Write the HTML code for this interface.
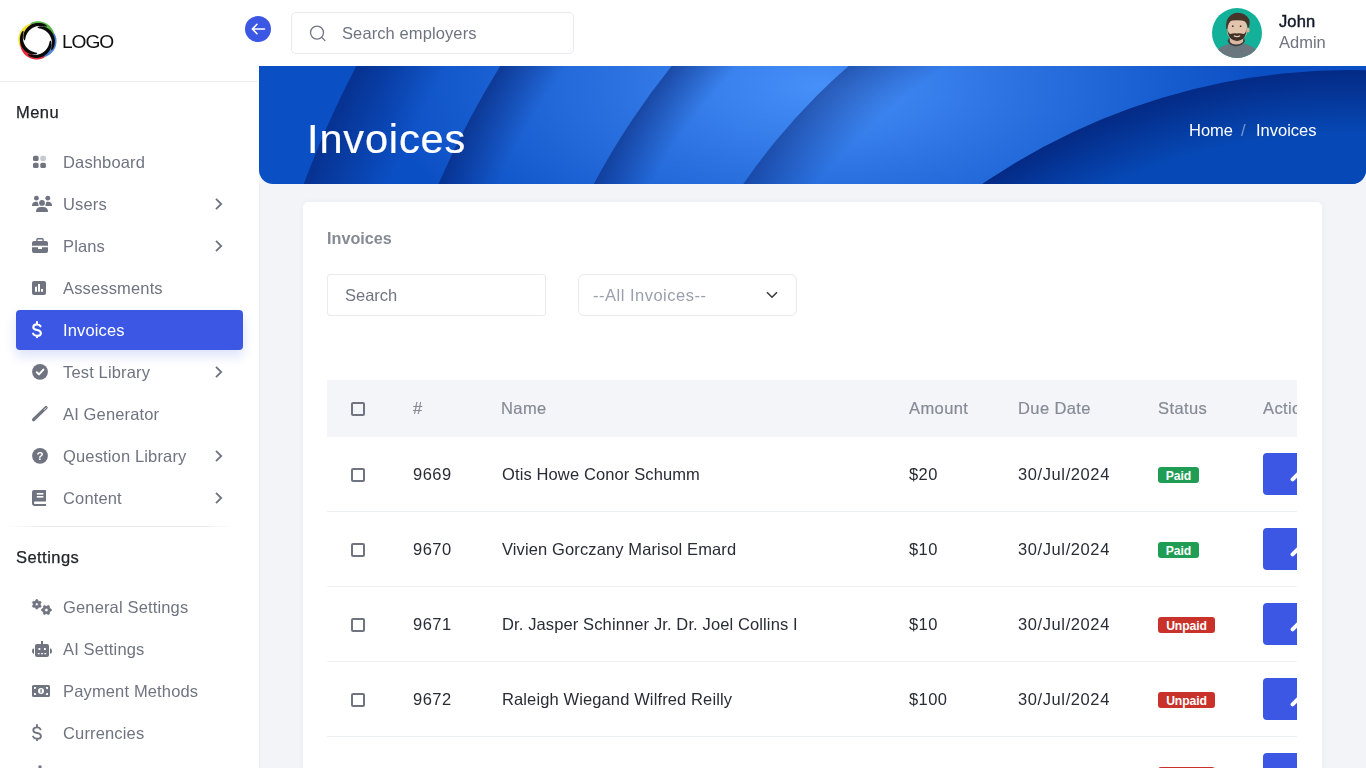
<!DOCTYPE html>
<html><head><meta charset="utf-8"><title>Invoices</title><style>
*{margin:0;padding:0;box-sizing:border-box}
html,body{width:1366px;height:768px;overflow:hidden;background:#f2f4f8;font-family:"Liberation Sans",sans-serif}
.t{will-change:transform}
.t{position:absolute;white-space:nowrap}
.abs{position:absolute}
svg{position:absolute;overflow:visible}
</style></head>
<body>
<div class="abs" style="left:0;top:0;width:259px;height:768px;background:#fff"></div><div class="abs" style="left:259px;top:184px;width:1px;height:584px;background:#e9ebf0"></div><div class="abs" style="left:259px;top:0;width:1107px;height:66px;background:#fff"></div><div class="abs" style="left:0;top:81px;width:258px;height:1px;background:#ebedf0"></div><svg style="left:17px;top:20px" width="41" height="41" viewBox="0 0 41 41"><path d="M4.45 27.84 L3.39 27.21 L2.81 26.32 L2.35 25.38 L1.99 24.39 L1.70 23.37 L1.48 22.33 L1.34 21.28 L1.27 20.21 L1.27 19.15 L1.35 18.08 L1.49 17.02 L1.70 15.97 L1.97 14.93 L2.31 13.92 L2.72 12.92 L3.18 11.96 L3.71 11.03 L4.29 10.14 L4.93 9.28 L5.61 8.47 L6.35 7.71 L7.13 7.00 L7.95 6.34 L8.81 5.74 L9.70 5.20 L10.62 4.71 L11.57 4.30 L12.53 3.94 L13.51 3.66 L14.51 3.44 L15.51 3.30 L16.51 3.24 L17.51 3.26 L18.49 3.37 L19.46 3.61 L20.40 4.40 L20.40 4.40 L19.55 5.15 L18.73 5.45 L17.92 5.73 L17.14 6.01 L16.37 6.30 L15.61 6.63 L14.88 6.97 L14.16 7.35 L13.46 7.75 L12.78 8.18 L12.12 8.64 L11.48 9.12 L10.87 9.64 L10.28 10.18 L9.71 10.75 L9.17 11.34 L8.66 11.96 L8.17 12.61 L7.71 13.28 L7.29 13.97 L6.89 14.69 L6.52 15.43 L6.19 16.18 L5.89 16.96 L5.63 17.76 L5.40 18.57 L5.20 19.40 L5.04 20.25 L4.92 21.11 L4.83 21.99 L4.78 22.88 L4.76 23.79 L4.77 24.71 L4.80 25.65 L4.81 26.64 L4.45 27.84Z" fill="#f2e236"/><path d="M12.96 4.45 L13.59 3.39 L14.48 2.81 L15.42 2.35 L16.41 1.99 L17.43 1.70 L18.47 1.48 L19.52 1.34 L20.59 1.27 L21.65 1.27 L22.72 1.35 L23.78 1.49 L24.83 1.70 L25.87 1.97 L26.88 2.31 L27.88 2.72 L28.84 3.18 L29.77 3.71 L30.66 4.29 L31.52 4.93 L32.33 5.61 L33.09 6.35 L33.80 7.13 L34.46 7.95 L35.06 8.81 L35.60 9.70 L36.09 10.62 L36.50 11.57 L36.86 12.53 L37.14 13.51 L37.36 14.51 L37.50 15.51 L37.56 16.51 L37.54 17.51 L37.43 18.49 L37.19 19.46 L36.40 20.40 L36.40 20.40 L35.65 19.55 L35.35 18.73 L35.07 17.92 L34.79 17.14 L34.50 16.37 L34.17 15.61 L33.83 14.88 L33.45 14.16 L33.05 13.46 L32.62 12.78 L32.16 12.12 L31.68 11.48 L31.16 10.87 L30.62 10.28 L30.05 9.71 L29.46 9.17 L28.84 8.66 L28.19 8.17 L27.52 7.71 L26.83 7.29 L26.11 6.89 L25.37 6.52 L24.62 6.19 L23.84 5.89 L23.04 5.63 L22.23 5.40 L21.40 5.20 L20.55 5.04 L19.69 4.92 L18.81 4.83 L17.92 4.78 L17.01 4.76 L16.09 4.77 L15.15 4.80 L14.16 4.81 L12.96 4.45Z" fill="#5db749"/><path d="M36.35 12.96 L37.41 13.59 L37.99 14.48 L38.45 15.42 L38.81 16.41 L39.10 17.43 L39.32 18.47 L39.46 19.52 L39.53 20.59 L39.53 21.65 L39.45 22.72 L39.31 23.78 L39.10 24.83 L38.83 25.87 L38.49 26.88 L38.08 27.88 L37.62 28.84 L37.09 29.77 L36.51 30.66 L35.87 31.52 L35.19 32.33 L34.45 33.09 L33.67 33.80 L32.85 34.46 L31.99 35.06 L31.10 35.60 L30.18 36.09 L29.23 36.50 L28.27 36.86 L27.29 37.14 L26.29 37.36 L25.29 37.50 L24.29 37.56 L23.29 37.54 L22.31 37.43 L21.34 37.19 L20.40 36.40 L20.40 36.40 L21.25 35.65 L22.07 35.35 L22.88 35.07 L23.66 34.79 L24.43 34.50 L25.19 34.17 L25.92 33.83 L26.64 33.45 L27.34 33.05 L28.02 32.62 L28.68 32.16 L29.32 31.68 L29.93 31.16 L30.52 30.62 L31.09 30.05 L31.63 29.46 L32.14 28.84 L32.63 28.19 L33.09 27.52 L33.51 26.83 L33.91 26.11 L34.28 25.37 L34.61 24.62 L34.91 23.84 L35.17 23.04 L35.40 22.23 L35.60 21.40 L35.76 20.55 L35.88 19.69 L35.97 18.81 L36.02 17.92 L36.04 17.01 L36.03 16.09 L36.00 15.15 L35.99 14.16 L36.35 12.96Z" fill="#5183d2"/><path d="M27.84 36.35 L27.21 37.41 L26.32 37.99 L25.38 38.45 L24.39 38.81 L23.37 39.10 L22.33 39.32 L21.28 39.46 L20.21 39.53 L19.15 39.53 L18.08 39.45 L17.02 39.31 L15.97 39.10 L14.93 38.83 L13.92 38.49 L12.92 38.08 L11.96 37.62 L11.03 37.09 L10.14 36.51 L9.28 35.87 L8.47 35.19 L7.71 34.45 L7.00 33.67 L6.34 32.85 L5.74 31.99 L5.20 31.10 L4.71 30.18 L4.30 29.23 L3.94 28.27 L3.66 27.29 L3.44 26.29 L3.30 25.29 L3.24 24.29 L3.26 23.29 L3.37 22.31 L3.61 21.34 L4.40 20.40 L4.40 20.40 L5.15 21.25 L5.45 22.07 L5.73 22.88 L6.01 23.66 L6.30 24.43 L6.63 25.19 L6.97 25.92 L7.35 26.64 L7.75 27.34 L8.18 28.02 L8.64 28.68 L9.12 29.32 L9.64 29.93 L10.18 30.52 L10.75 31.09 L11.34 31.63 L11.96 32.14 L12.61 32.63 L13.28 33.09 L13.97 33.51 L14.69 33.91 L15.43 34.28 L16.18 34.61 L16.96 34.91 L17.76 35.17 L18.57 35.40 L19.40 35.60 L20.25 35.76 L21.11 35.88 L21.99 35.97 L22.88 36.02 L23.79 36.04 L24.71 36.03 L25.65 36.00 L26.64 35.99 L27.84 36.35Z" fill="#e42a3b"/><path d="M7.50 20.40 L6.73 19.57 L6.48 18.70 L6.35 17.82 L6.30 16.91 L6.33 16.00 L6.43 15.08 L6.60 14.17 L6.85 13.26 L7.16 12.36 L7.53 11.48 L7.97 10.62 L8.47 9.79 L9.04 8.98 L9.66 8.21 L10.33 7.47 L11.06 6.78 L11.84 6.14 L12.67 5.54 L13.53 5.00 L14.44 4.51 L15.39 4.09 L16.36 3.72 L17.36 3.42 L18.39 3.18 L19.43 3.02 L20.48 2.92 L21.55 2.90 L22.61 2.94 L23.67 3.06 L24.73 3.26 L25.77 3.53 L26.78 3.87 L27.77 4.30 L28.71 4.81 L29.58 5.43 L30.15 6.47 L30.15 6.47 L28.88 6.58 L27.87 6.39 L26.89 6.20 L25.94 6.06 L24.99 5.96 L24.06 5.90 L23.14 5.89 L22.23 5.94 L21.34 6.02 L20.47 6.16 L19.62 6.34 L18.78 6.56 L17.97 6.83 L17.19 7.13 L16.43 7.48 L15.70 7.86 L15.00 8.28 L14.33 8.74 L13.69 9.22 L13.08 9.73 L12.51 10.28 L11.98 10.84 L11.48 11.43 L11.01 12.05 L10.58 12.68 L10.19 13.33 L9.83 13.99 L9.51 14.67 L9.23 15.36 L8.98 16.05 L8.76 16.76 L8.57 17.48 L8.41 18.20 L8.26 18.92 L8.09 19.65 L7.50 20.40Z" fill="#0b0b0b"/><path d="M20.40 7.50 L21.23 6.73 L22.10 6.48 L22.98 6.35 L23.89 6.30 L24.80 6.33 L25.72 6.43 L26.63 6.60 L27.54 6.85 L28.44 7.16 L29.32 7.53 L30.18 7.97 L31.01 8.47 L31.82 9.04 L32.59 9.66 L33.33 10.33 L34.02 11.06 L34.66 11.84 L35.26 12.67 L35.80 13.53 L36.29 14.44 L36.71 15.39 L37.08 16.36 L37.38 17.36 L37.62 18.39 L37.78 19.43 L37.88 20.48 L37.90 21.55 L37.86 22.61 L37.74 23.67 L37.54 24.73 L37.27 25.77 L36.93 26.78 L36.50 27.77 L35.99 28.71 L35.37 29.58 L34.33 30.15 L34.33 30.15 L34.22 28.88 L34.41 27.87 L34.60 26.89 L34.74 25.94 L34.84 24.99 L34.90 24.06 L34.91 23.14 L34.86 22.23 L34.78 21.34 L34.64 20.47 L34.46 19.62 L34.24 18.78 L33.97 17.97 L33.67 17.19 L33.32 16.43 L32.94 15.70 L32.52 15.00 L32.06 14.33 L31.58 13.69 L31.07 13.08 L30.52 12.51 L29.96 11.98 L29.37 11.48 L28.75 11.01 L28.12 10.58 L27.47 10.19 L26.81 9.83 L26.13 9.51 L25.44 9.23 L24.75 8.98 L24.04 8.76 L23.32 8.57 L22.60 8.41 L21.88 8.26 L21.15 8.09 L20.40 7.50Z" fill="#0b0b0b"/><path d="M33.30 20.40 L34.07 21.23 L34.32 22.10 L34.45 22.98 L34.50 23.89 L34.47 24.80 L34.37 25.72 L34.20 26.63 L33.95 27.54 L33.64 28.44 L33.27 29.32 L32.83 30.18 L32.33 31.01 L31.76 31.82 L31.14 32.59 L30.47 33.33 L29.74 34.02 L28.96 34.66 L28.13 35.26 L27.27 35.80 L26.36 36.29 L25.41 36.71 L24.44 37.08 L23.44 37.38 L22.41 37.62 L21.37 37.78 L20.32 37.88 L19.25 37.90 L18.19 37.86 L17.13 37.74 L16.07 37.54 L15.03 37.27 L14.02 36.93 L13.03 36.50 L12.09 35.99 L11.22 35.37 L10.65 34.33 L10.65 34.33 L11.92 34.22 L12.93 34.41 L13.91 34.60 L14.86 34.74 L15.81 34.84 L16.74 34.90 L17.66 34.91 L18.57 34.86 L19.46 34.78 L20.33 34.64 L21.18 34.46 L22.02 34.24 L22.83 33.97 L23.61 33.67 L24.37 33.32 L25.10 32.94 L25.80 32.52 L26.47 32.06 L27.11 31.58 L27.72 31.07 L28.29 30.52 L28.82 29.96 L29.32 29.37 L29.79 28.75 L30.22 28.12 L30.61 27.47 L30.97 26.81 L31.29 26.13 L31.57 25.44 L31.82 24.75 L32.04 24.04 L32.23 23.32 L32.39 22.60 L32.54 21.88 L32.71 21.15 L33.30 20.40Z" fill="#0b0b0b"/><path d="M20.40 33.30 L19.57 34.07 L18.70 34.32 L17.82 34.45 L16.91 34.50 L16.00 34.47 L15.08 34.37 L14.17 34.20 L13.26 33.95 L12.36 33.64 L11.48 33.27 L10.62 32.83 L9.79 32.33 L8.98 31.76 L8.21 31.14 L7.47 30.47 L6.78 29.74 L6.14 28.96 L5.54 28.13 L5.00 27.27 L4.51 26.36 L4.09 25.41 L3.72 24.44 L3.42 23.44 L3.18 22.41 L3.02 21.37 L2.92 20.32 L2.90 19.25 L2.94 18.19 L3.06 17.13 L3.26 16.07 L3.53 15.03 L3.87 14.02 L4.30 13.03 L4.81 12.09 L5.43 11.22 L6.47 10.65 L6.47 10.65 L6.58 11.92 L6.39 12.93 L6.20 13.91 L6.06 14.86 L5.96 15.81 L5.90 16.74 L5.89 17.66 L5.94 18.57 L6.02 19.46 L6.16 20.33 L6.34 21.18 L6.56 22.02 L6.83 22.83 L7.13 23.61 L7.48 24.37 L7.86 25.10 L8.28 25.80 L8.74 26.47 L9.22 27.11 L9.73 27.72 L10.28 28.29 L10.84 28.82 L11.43 29.32 L12.05 29.79 L12.68 30.22 L13.33 30.61 L13.99 30.97 L14.67 31.29 L15.36 31.57 L16.05 31.82 L16.76 32.04 L17.48 32.23 L18.20 32.39 L18.92 32.54 L19.65 32.71 L20.40 33.30Z" fill="#0b0b0b"/></svg><div class="t " style="left:61.6px;top:31.25px;font-size:19.2px;line-height:22px;color:#111;font-weight:normal;letter-spacing:-1.1px">LOGO</div>
<div class="t " style="left:16px;top:102.18px;font-size:16.5px;line-height:20px;color:#212529;font-weight:normal;-webkit-text-stroke:0.25px #212529;letter-spacing:0.45px">Menu</div>
<div class="abs" style="left:16px;top:310px;width:227px;height:40px;background:#3b57e3;border-radius:4px;box-shadow:0 6px 12px rgba(59,87,227,0.18)"></div><div class="t " style="left:63.2px;top:152.38px;font-size:16.5px;line-height:20px;color:#6f7480;font-weight:normal;letter-spacing:0.15px">Dashboard</div>
<div class="t " style="left:63.2px;top:194.38px;font-size:16.5px;line-height:20px;color:#6f7480;font-weight:normal;letter-spacing:0.15px">Users</div>
<svg style="left:214px;top:198.3px" width="10" height="12" viewBox="0 0 10 12"><path d="M2 0.8 L7.2 6 L2 11.2" fill="none" stroke="#6f7480" stroke-width="1.8"/></svg><div class="t " style="left:63.2px;top:236.38px;font-size:16.5px;line-height:20px;color:#6f7480;font-weight:normal;letter-spacing:0.15px">Plans</div>
<svg style="left:214px;top:240.3px" width="10" height="12" viewBox="0 0 10 12"><path d="M2 0.8 L7.2 6 L2 11.2" fill="none" stroke="#6f7480" stroke-width="1.8"/></svg><div class="t " style="left:63.2px;top:278.38px;font-size:16.5px;line-height:20px;color:#6f7480;font-weight:normal;letter-spacing:0.15px">Assessments</div>
<div class="t " style="left:63.2px;top:320.38px;font-size:16.5px;line-height:20px;color:#fff;font-weight:normal;letter-spacing:0.15px">Invoices</div>
<div class="t " style="left:63.2px;top:362.38px;font-size:16.5px;line-height:20px;color:#6f7480;font-weight:normal;letter-spacing:0.15px">Test Library</div>
<svg style="left:214px;top:366.3px" width="10" height="12" viewBox="0 0 10 12"><path d="M2 0.8 L7.2 6 L2 11.2" fill="none" stroke="#6f7480" stroke-width="1.8"/></svg><div class="t " style="left:63.2px;top:404.38px;font-size:16.5px;line-height:20px;color:#6f7480;font-weight:normal;letter-spacing:0.15px">AI Generator</div>
<div class="t " style="left:63.2px;top:446.38px;font-size:16.5px;line-height:20px;color:#6f7480;font-weight:normal;letter-spacing:0.15px">Question Library</div>
<svg style="left:214px;top:450.3px" width="10" height="12" viewBox="0 0 10 12"><path d="M2 0.8 L7.2 6 L2 11.2" fill="none" stroke="#6f7480" stroke-width="1.8"/></svg><div class="t " style="left:63.2px;top:488.38px;font-size:16.5px;line-height:20px;color:#6f7480;font-weight:normal;letter-spacing:0.15px">Content</div>
<svg style="left:214px;top:492.3px" width="10" height="12" viewBox="0 0 10 12"><path d="M2 0.8 L7.2 6 L2 11.2" fill="none" stroke="#6f7480" stroke-width="1.8"/></svg><div class="abs" style="left:8px;top:526px;width:225px;height:1px;background:linear-gradient(90deg,rgba(230,232,236,0),#e6e8ec 15%,#e6e8ec 85%,rgba(230,232,236,0))"></div><div class="t " style="left:16px;top:547.18px;font-size:16.5px;line-height:20px;color:#212529;font-weight:normal;-webkit-text-stroke:0.25px #212529;letter-spacing:0.45px">Settings</div>
<div class="t " style="left:63.2px;top:597.28px;font-size:16.5px;line-height:20px;color:#6f7480;font-weight:normal;letter-spacing:0.15px">General Settings</div>
<div class="t " style="left:63.2px;top:639.28px;font-size:16.5px;line-height:20px;color:#6f7480;font-weight:normal;letter-spacing:0.15px">AI Settings</div>
<div class="t " style="left:63.2px;top:681.28px;font-size:16.5px;line-height:20px;color:#6f7480;font-weight:normal;letter-spacing:0.15px">Payment Methods</div>
<div class="t " style="left:63.2px;top:723.28px;font-size:16.5px;line-height:20px;color:#6f7480;font-weight:normal;letter-spacing:0.15px">Currencies</div>

<svg style="left:0;top:0" width="259" height="768">
<g fill="#6f7480">
<rect x="33" y="155.8" width="5.6" height="5.2" rx="1.6"/>
<rect x="40.3" y="155.8" width="5.6" height="5.2" rx="1.6" fill="#c7cbd1"/>
<rect x="33" y="162.8" width="5.6" height="5.2" rx="1.6"/>
<rect x="40.3" y="162.8" width="5.6" height="5.2" rx="1.6"/>
<!-- users -->
<circle cx="36.4" cy="198.2" r="2.4"/><circle cx="47.8" cy="198.2" r="2.4"/><circle cx="42" cy="202.9" r="2.9"/>
<path d="M32 206 Q32 201.8 36 201.8 L37.5 201.8 Q38.5 203.5 38.6 206 Z"/>
<path d="M52 206 Q52 201.8 48 201.8 L46.5 201.8 Q45.5 203.5 45.4 206 Z"/>
<path d="M36 212 Q36 207 41 207 L43 207 Q48 207 48 212 Z"/>
<!-- briefcase -->
<path d="M36.2 241.2 V239.5 Q36.2 238 37.7 238 H42.3 Q43.8 238 43.8 239.5 V241.2 H42.4 V239.5 H37.6 V241.2 Z"/>
<path d="M32 243 Q32 241 34 241 H46 Q48 241 48 243 V245.8 H32 Z"/>
<path d="M32 247.2 H38 V249 H42 V247.2 H48 V251 Q48 253 46 253 H34 Q32 253 32 251 Z"/>
<!-- assessments -->
<path fill-rule="evenodd" d="M34 281 H44 Q46 281 46 283 V293 Q46 295 44 295 H34 Q32 295 32 293 V283 Q32 281 34 281 Z M35 286.8 V291.8 H37 V286.8 Z M38 284 V291.8 H40 V284 Z M41 288.9 V291.8 H43 V288.9 Z"/>
<!-- test library check circle -->
<circle cx="40" cy="371.8" r="7.9"/>
<!-- pencil -->
<path d="M33.6 419.6 L46 407.6" stroke="#6f7480" stroke-width="3.4" stroke-linecap="round"/>
<!-- question -->
<circle cx="40" cy="455.8" r="7.9"/>
<!-- book -->
<path d="M34 490 H46 V501.5 H35 Q34 501.5 34 502.8 Q34 504 35 504 H46 V506 H34.5 Q32 506 32 503 V492 Q32 490 34 490 Z"/>
<!-- gears -->
<path fill-rule="evenodd" stroke="#6f7480" stroke-width="0.7" stroke-linejoin="round" d="M36.17 599.54 L37.43 599.54 L38.18 600.97 L38.99 601.44 L40.61 601.38 L41.23 602.46 L40.37 603.83 L40.37 604.77 L41.23 606.14 L40.61 607.22 L38.99 607.16 L38.18 607.63 L37.43 609.06 L36.17 609.06 L35.42 607.63 L34.61 607.16 L32.99 607.22 L32.37 606.14 L33.23 604.77 L33.23 603.83 L32.37 602.46 L32.99 601.38 L34.61 601.44 L35.42 600.97Z M36.80 602.80 A1.5 1.5 0 1 0 36.80 605.80 A1.5 1.5 0 1 0 36.80 602.80Z"/>
<path fill-rule="evenodd" stroke="#6f7480" stroke-width="0.7" stroke-linejoin="round" d="M48.31 605.38 L49.44 606.03 L49.41 607.69 L49.91 608.55 L51.36 609.35 L51.36 610.65 L49.91 611.45 L49.41 612.31 L49.44 613.97 L48.31 614.62 L46.90 613.77 L45.90 613.77 L44.49 614.62 L43.36 613.97 L43.39 612.31 L42.89 611.45 L41.44 610.65 L41.44 609.35 L42.89 608.55 L43.39 607.69 L43.36 606.03 L44.49 605.38 L45.90 606.23 L46.90 606.23Z M46.40 608.20 A1.8 1.8 0 1 0 46.40 611.80 A1.8 1.8 0 1 0 46.40 608.20Z"/>
<!-- robot -->
<rect x="41" y="641" width="2" height="3.5"/>
<path fill-rule="evenodd" d="M37 644 H47 Q49 644 49 646 V655 Q49 657 47 657 H37 Q35 657 35 655 V646 Q35 644 37 644 Z M38.5 648 V650 H40.3 V648 Z M44 648 V650 H45.8 V648 Z M37.8 653 V654.3 H39.6 V653 Z M41.1 653 V654.3 H42.9 V653 Z M44.4 653 V654.3 H46.2 V653 Z"/>
<path d="M34 648.3 V653.8 Q32 653.8 32 651 Q32 648.3 34 648.3 Z"/>
<path d="M50 648.3 V653.8 Q52 653.8 52 651 Q52 648.3 50 648.3 Z"/>
<!-- money -->
<path fill-rule="evenodd" d="M33.5 685 H48.5 Q50 685 50 686.5 V695.5 Q50 697 48.5 697 H33.5 Q32 697 32 695.5 V686.5 Q32 685 33.5 685 Z M41 688 A3 3 0 1 0 41 694 A3 3 0 1 0 41 688 Z M34 687 V689.3 A2.3 2.3 0 0 0 36.3 687 Z M48 687 V689.3 A2.3 2.3 0 0 1 45.7 687 Z M34 695 V692.7 A2.3 2.3 0 0 1 36.3 695 Z M48 695 V692.7 A2.3 2.3 0 0 0 45.7 695 Z"/>
</g>
<g fill="none" stroke="#fff" stroke-linecap="round" stroke-linejoin="round">
<path d="M36.8 372.2 L39 374.4 L43.4 369.6" stroke-width="2"/>
</g>
<text x="40" y="460.3" font-family="Liberation Sans" font-weight="bold" font-size="11.5" fill="#fff" text-anchor="middle">?</text>
<g fill="#fff"><rect x="36.8" y="493" width="6.6" height="1.6"/><rect x="36.8" y="496" width="6.6" height="1.6"/></g><rect x="40.4" y="689.2" width="1.3" height="3.6" fill="#6f7480"/><path d="M44.2 409.6 L46 407.8" stroke="#fff" stroke-width="0.9" stroke-linecap="round" opacity="0.9"/>
<!-- dollar icons -->
<path d="M40.5 326.3 Q39.6 324.4 37 324.4 Q33.3 324.4 33.3 327.2 Q33.3 329.4 37 330 Q40.9 330.6 40.9 333.2 Q40.9 335.8 37 335.8 Q34.2 335.8 33.1 333.6 M37 322 V324.4 M37 335.8 V337.3" fill="none" stroke="#fff" stroke-width="2.1" stroke-linecap="round"/>
<path transform="translate(0 403)" d="M40.5 326.3 Q39.6 324.4 37 324.4 Q33.3 324.4 33.3 327.2 Q33.3 329.4 37 330 Q40.9 330.6 40.9 333.2 Q40.9 335.8 37 335.8 Q34.2 335.8 33.1 333.6 M37 322 V324.4 M37 335.8 V337.3" fill="none" stroke="#6f7480" stroke-width="1.9" stroke-linecap="round"/>
<rect x="38.5" y="765.5" width="3" height="3" fill="#6f7480"/>
</svg><div class="abs" style="left:245.2px;top:16px;width:26px;height:26px;border-radius:50%;background:#3b57e3"></div><svg style="left:245px;top:16px" width="26" height="26" viewBox="0 0 26 26"><path d="M19.5 13 H7.5 M12 8.3 L7.3 13 L12 17.7" fill="none" stroke="#fff" stroke-width="1.6" stroke-linecap="round" stroke-linejoin="round"/></svg><div class="abs" style="left:291px;top:12px;width:283px;height:42px;border:1px solid #e8eaee;border-radius:5px;background:#fff"></div><svg style="left:308px;top:24px" width="20" height="20" viewBox="0 0 20 20"><circle cx="9" cy="8.6" r="6.5" fill="none" stroke="#6f7480" stroke-width="1.3"/><path d="M13.8 13.4 L17 16.6" stroke="#6f7480" stroke-width="1.3" stroke-linecap="round"/></svg><div class="t " style="left:341.5px;top:22.98px;font-size:16.5px;line-height:20px;color:#6f7480;font-weight:normal;letter-spacing:0.1px">Search employers</div>
<svg style="left:1212px;top:8px" width="50" height="50" viewBox="0 0 50 50">
<defs><clipPath id="av"><circle cx="25" cy="25" r="25"/></clipPath></defs>
<g clip-path="url(#av)">
<rect width="50" height="50" fill="#13b09a"/>
<path d="M2 52 Q3 40 14 37 Q18 35.5 20 35 L30 35 Q33 35.5 36 37 Q47 40 48 52 Z" fill="#6a777e"/>
<path d="M15.5 33 Q17 37.5 24 38.5 Q31 37.5 33 33 L32 30 L17 30 Z" fill="#3c3f42"/>
<path d="M17.5 28 L31.5 28 L31 34 Q28 36.5 24.5 36.5 Q20 36.5 18 34 Z" fill="#d9b7a0"/>
<path d="M15 17 Q15 10 24.5 9.5 Q35 10 35 18 L35 24 Q34.5 31 25 32 Q15.5 31 15 24 Z" fill="#e2c3ab"/>
<path d="M15.2 19.5 Q15.3 32 25 33 Q34.7 32 34.8 19.5 Q34 25.5 31.5 26 Q28.5 25 25 25.5 Q21.5 25 18.5 26 Q16 25.5 15.2 19.5 Z" fill="#3f2f26"/><path d="M21.8 27.8 Q25 29.5 28.2 27.8" stroke="#e9cdbb" stroke-width="1.2" fill="none"/><circle cx="20.8" cy="18.2" r="0.9" fill="#4a3a30"/><circle cx="28.6" cy="18.2" r="0.9" fill="#4a3a30"/><path d="M14.2 21 Q13 8 23 5 Q33 3.5 37.5 12 Q38 18 36 21 Q35.5 13 30 12.5 Q25 12 20 12.5 Q16 14 15.5 21 Z" fill="#46352b"/>
<ellipse cx="36" cy="22" rx="1.6" ry="2.6" fill="#d8b49c"/>
</g></svg><div class="t " style="left:1278.5px;top:11.18px;font-size:16.5px;line-height:20px;color:#111827;font-weight:normal;-webkit-text-stroke:0.45px #111827;letter-spacing:0.1px">John</div>
<div class="t " style="left:1278.5px;top:31.98px;font-size:16.5px;line-height:20px;color:#6f7480;font-weight:normal;">Admin</div>
<div class="abs" style="left:259px;top:66px;width:1107px;height:118px;overflow:hidden;border-radius:0 0 14px 14px;background:#0b4fc4"><svg style="left:0;top:0" width="1107" height="118"><defs><radialGradient id="s1" gradientUnits="userSpaceOnUse" cx="1002.5" cy="474.5" r="1022"><stop offset="0.9217" stop-color="#031a66" stop-opacity="0"/><stop offset="1" stop-color="#031a66" stop-opacity="0.55"/></radialGradient><radialGradient id="s2" gradientUnits="userSpaceOnUse" cx="1002.5" cy="474.5" r="897"><stop offset="0.9387" stop-color="#031a66" stop-opacity="0"/><stop offset="1" stop-color="#031a66" stop-opacity="0.55"/></radialGradient><radialGradient id="s3" gradientUnits="userSpaceOnUse" cx="1002.5" cy="474.5" r="757"><stop offset="0.9339" stop-color="#031a66" stop-opacity="0"/><stop offset="1" stop-color="#031a66" stop-opacity="0.5"/></radialGradient><radialGradient id="s4" gradientUnits="userSpaceOnUse" cx="1002.5" cy="474.5" r="629"><stop offset="0.9046" stop-color="#031a66" stop-opacity="0"/><stop offset="1" stop-color="#031a66" stop-opacity="0.45"/></radialGradient><radialGradient id="c5" gradientUnits="userSpaceOnUse" cx="1091" cy="654" r="650"><stop offset="0.90" stop-color="#0649b6"/><stop offset="1" stop-color="#042a85"/></radialGradient><radialGradient id="hl" gradientUnits="userSpaceOnUse" cx="0" cy="0" r="1" gradientTransform="translate(560 20) scale(440 200)"><stop offset="0" stop-color="#4d97ff" stop-opacity="0.9"/><stop offset="0.5" stop-color="#4d97ff" stop-opacity="0.45"/><stop offset="1" stop-color="#4d97ff" stop-opacity="0"/></radialGradient></defs><rect width="1107" height="118" fill="url(#hl)"/><circle cx="1002.5" cy="474.5" r="1022" fill="url(#s1)"/><circle cx="1002.5" cy="474.5" r="897" fill="url(#s2)"/><circle cx="1002.5" cy="474.5" r="757" fill="url(#s3)"/><circle cx="1002.5" cy="474.5" r="629" fill="url(#s4)"/><circle cx="1091" cy="654" r="650" fill="url(#c5)"/></svg></div><div class="t " style="left:306.8px;top:114.62px;font-size:41.5px;line-height:48px;color:#fff;font-weight:normal;letter-spacing:0.85px;-webkit-text-stroke:0.2px #fff">Invoices</div>
<div class="t " style="left:1189.2px;top:120.18px;font-size:16.5px;line-height:20px;color:#fff;font-weight:normal;">Home</div>
<div class="t " style="left:1241px;top:120.18px;font-size:16.5px;line-height:20px;color:rgba(255,255,255,0.45);font-weight:normal;">/</div>
<div class="t " style="left:1255.6px;top:120.18px;font-size:16.5px;line-height:20px;color:#fff;font-weight:normal;">Invoices</div>
<div class="abs" style="left:303px;top:202px;width:1019px;height:600px;background:#fff;border-radius:5px;box-shadow:0 0 6px rgba(30,40,80,0.04)"></div><div class="t " style="left:327.3px;top:228.09px;font-size:16.2px;line-height:20px;color:#858a95;font-weight:bold;">Invoices</div>
<div class="abs" style="left:327px;top:274px;width:219px;height:42px;border:1px solid #e8eaee;border-radius:3px"></div><div class="t " style="left:344.5px;top:285.48px;font-size:16.5px;line-height:20px;color:#6f7480;font-weight:normal;">Search</div>
<div class="abs" style="left:578px;top:274px;width:219px;height:42px;border:1px solid #e8eaee;border-radius:6px"></div><div class="t " style="left:592.5px;top:284.78px;font-size:16.5px;line-height:20px;color:#9aa0ab;font-weight:normal;letter-spacing:0.5px">--All Invoices--</div>
<svg style="left:766px;top:291px" width="12" height="8" viewBox="0 0 12 8"><path d="M1 1.2 L6 6.2 L11 1.2" fill="none" stroke="#343a40" stroke-width="1.6"/></svg><div class="abs" style="left:327px;top:380px;width:970px;height:400px;overflow:hidden"><div class="abs" style="left:0;top:0;width:1100px;height:57px;background:#f3f5f9"></div><div class="abs" style="left:24.3px;top:22.2px;width:13.5px;height:13.5px;border:2px solid #6f7480;border-radius:2px"></div><div class="t " style="left:85.5px;top:17.88px;font-size:16.5px;line-height:20px;color:#858a95;font-weight:normal;letter-spacing:0.4px;-webkit-text-stroke:0.2px #858a95">#</div>
<div class="t " style="left:174.3px;top:17.88px;font-size:16.5px;line-height:20px;color:#858a95;font-weight:normal;letter-spacing:0.4px;-webkit-text-stroke:0.2px #858a95">Name</div>
<div class="t " style="left:581.6px;top:17.88px;font-size:16.5px;line-height:20px;color:#858a95;font-weight:normal;letter-spacing:0.4px;-webkit-text-stroke:0.2px #858a95">Amount</div>
<div class="t " style="left:690.8px;top:17.88px;font-size:16.5px;line-height:20px;color:#858a95;font-weight:normal;letter-spacing:0.4px;-webkit-text-stroke:0.2px #858a95">Due Date</div>
<div class="t " style="left:830.5px;top:17.88px;font-size:16.5px;line-height:20px;color:#858a95;font-weight:normal;letter-spacing:0.4px;-webkit-text-stroke:0.2px #858a95">Status</div>
<div class="t " style="left:935.8px;top:17.88px;font-size:16.5px;line-height:20px;color:#858a95;font-weight:normal;letter-spacing:0.4px;-webkit-text-stroke:0.2px #858a95">Action</div>
<div class="abs" style="left:0;top:131px;width:1100px;height:1px;background:#edf0f4"></div><div class="abs" style="left:24.3px;top:88.39999999999998px;width:13.5px;height:13.5px;border:2px solid #6f7480;border-radius:2px"></div><div class="t " style="left:86px;top:84.38px;font-size:16.5px;line-height:20px;color:#282c35;font-weight:normal;letter-spacing:0.5px">9669</div>
<div class="t " style="left:174.5px;top:84.38px;font-size:16.5px;line-height:20px;color:#282c35;font-weight:normal;letter-spacing:0.12px">Otis Howe Conor Schumm</div>
<div class="t " style="left:582px;top:84.38px;font-size:16.5px;line-height:20px;color:#282c35;font-weight:normal;letter-spacing:0.4px">$20</div>
<div class="t " style="left:691px;top:84.38px;font-size:16.5px;line-height:20px;color:#282c35;font-weight:normal;letter-spacing:0.6px">30/Jul/2024</div>
<div class="abs" style="left:831px;top:87.10000000000002px;width:41px;height:15.5px;border-radius:3px;background:#1f9d55;color:#fff;font-weight:bold;font-size:12.2px;line-height:18.5px;text-align:center;letter-spacing:-0.1px">Paid</div><div class="abs" style="left:936px;top:73px;width:42px;height:42px;border-radius:4px;background:#3b57e3"></div><svg style="left:936px;top:73px" width="42" height="42" viewBox="0 0 42 42"><path d="M29.6 26.4 L37 19" stroke="#fff" stroke-width="4" stroke-linecap="round"/><circle cx="37.5" cy="17.5" r="3.6" fill="#fff"/></svg><div class="abs" style="left:0;top:206px;width:1100px;height:1px;background:#edf0f4"></div><div class="abs" style="left:24.3px;top:163.39999999999998px;width:13.5px;height:13.5px;border:2px solid #6f7480;border-radius:2px"></div><div class="t " style="left:86px;top:159.38px;font-size:16.5px;line-height:20px;color:#282c35;font-weight:normal;letter-spacing:0.5px">9670</div>
<div class="t " style="left:174.5px;top:159.38px;font-size:16.5px;line-height:20px;color:#282c35;font-weight:normal;letter-spacing:0.12px">Vivien Gorczany Marisol Emard</div>
<div class="t " style="left:582px;top:159.38px;font-size:16.5px;line-height:20px;color:#282c35;font-weight:normal;letter-spacing:0.4px">$10</div>
<div class="t " style="left:691px;top:159.38px;font-size:16.5px;line-height:20px;color:#282c35;font-weight:normal;letter-spacing:0.6px">30/Jul/2024</div>
<div class="abs" style="left:831px;top:162.10000000000002px;width:41px;height:15.5px;border-radius:3px;background:#1f9d55;color:#fff;font-weight:bold;font-size:12.2px;line-height:18.5px;text-align:center;letter-spacing:-0.1px">Paid</div><div class="abs" style="left:936px;top:148px;width:42px;height:42px;border-radius:4px;background:#3b57e3"></div><svg style="left:936px;top:148px" width="42" height="42" viewBox="0 0 42 42"><path d="M29.6 26.4 L37 19" stroke="#fff" stroke-width="4" stroke-linecap="round"/><circle cx="37.5" cy="17.5" r="3.6" fill="#fff"/></svg><div class="abs" style="left:0;top:281px;width:1100px;height:1px;background:#edf0f4"></div><div class="abs" style="left:24.3px;top:238.39999999999998px;width:13.5px;height:13.5px;border:2px solid #6f7480;border-radius:2px"></div><div class="t " style="left:86px;top:234.38px;font-size:16.5px;line-height:20px;color:#282c35;font-weight:normal;letter-spacing:0.5px">9671</div>
<div class="t " style="left:174.5px;top:234.38px;font-size:16.5px;line-height:20px;color:#282c35;font-weight:normal;letter-spacing:0.12px">Dr. Jasper Schinner Jr. Dr. Joel Collins I</div>
<div class="t " style="left:582px;top:234.38px;font-size:16.5px;line-height:20px;color:#282c35;font-weight:normal;letter-spacing:0.4px">$10</div>
<div class="t " style="left:691px;top:234.38px;font-size:16.5px;line-height:20px;color:#282c35;font-weight:normal;letter-spacing:0.6px">30/Jul/2024</div>
<div class="abs" style="left:831px;top:237.10000000000002px;width:57px;height:15.5px;border-radius:3px;background:#c8322b;color:#fff;font-weight:bold;font-size:12.2px;line-height:18.5px;text-align:center;letter-spacing:-0.1px">Unpaid</div><div class="abs" style="left:936px;top:223px;width:42px;height:42px;border-radius:4px;background:#3b57e3"></div><svg style="left:936px;top:223px" width="42" height="42" viewBox="0 0 42 42"><path d="M29.6 26.4 L37 19" stroke="#fff" stroke-width="4" stroke-linecap="round"/><circle cx="37.5" cy="17.5" r="3.6" fill="#fff"/></svg><div class="abs" style="left:0;top:356px;width:1100px;height:1px;background:#edf0f4"></div><div class="abs" style="left:24.3px;top:313.4px;width:13.5px;height:13.5px;border:2px solid #6f7480;border-radius:2px"></div><div class="t " style="left:86px;top:309.38px;font-size:16.5px;line-height:20px;color:#282c35;font-weight:normal;letter-spacing:0.5px">9672</div>
<div class="t " style="left:174.5px;top:309.38px;font-size:16.5px;line-height:20px;color:#282c35;font-weight:normal;letter-spacing:0.12px">Raleigh Wiegand Wilfred Reilly</div>
<div class="t " style="left:582px;top:309.38px;font-size:16.5px;line-height:20px;color:#282c35;font-weight:normal;letter-spacing:0.4px">$100</div>
<div class="t " style="left:691px;top:309.38px;font-size:16.5px;line-height:20px;color:#282c35;font-weight:normal;letter-spacing:0.6px">30/Jul/2024</div>
<div class="abs" style="left:831px;top:312.1px;width:57px;height:15.5px;border-radius:3px;background:#c8322b;color:#fff;font-weight:bold;font-size:12.2px;line-height:18.5px;text-align:center;letter-spacing:-0.1px">Unpaid</div><div class="abs" style="left:936px;top:298px;width:42px;height:42px;border-radius:4px;background:#3b57e3"></div><svg style="left:936px;top:298px" width="42" height="42" viewBox="0 0 42 42"><path d="M29.6 26.4 L37 19" stroke="#fff" stroke-width="4" stroke-linecap="round"/><circle cx="37.5" cy="17.5" r="3.6" fill="#fff"/></svg><div class="abs" style="left:0;top:431px;width:1100px;height:1px;background:#edf0f4"></div><div class="abs" style="left:24.3px;top:388.4px;width:13.5px;height:13.5px;border:2px solid #6f7480;border-radius:2px"></div><div class="t " style="left:86px;top:384.38px;font-size:16.5px;line-height:20px;color:#282c35;font-weight:normal;letter-spacing:0.5px">9673</div>
<div class="t " style="left:174.5px;top:384.38px;font-size:16.5px;line-height:20px;color:#282c35;font-weight:normal;letter-spacing:0.12px">Ottilie Feest Estel Ruecker</div>
<div class="t " style="left:582px;top:384.38px;font-size:16.5px;line-height:20px;color:#282c35;font-weight:normal;letter-spacing:0.4px">$20</div>
<div class="t " style="left:691px;top:384.38px;font-size:16.5px;line-height:20px;color:#282c35;font-weight:normal;letter-spacing:0.6px">30/Jul/2024</div>
<div class="abs" style="left:831px;top:387.1px;width:57px;height:15.5px;border-radius:3px;background:#c8322b;color:#fff;font-weight:bold;font-size:12.2px;line-height:18.5px;text-align:center;letter-spacing:-0.1px">Unpaid</div><div class="abs" style="left:936px;top:373px;width:42px;height:42px;border-radius:4px;background:#3b57e3"></div><svg style="left:936px;top:373px" width="42" height="42" viewBox="0 0 42 42"><path d="M29.6 26.4 L37 19" stroke="#fff" stroke-width="4" stroke-linecap="round"/><circle cx="37.5" cy="17.5" r="3.6" fill="#fff"/></svg></div>
</body></html>
